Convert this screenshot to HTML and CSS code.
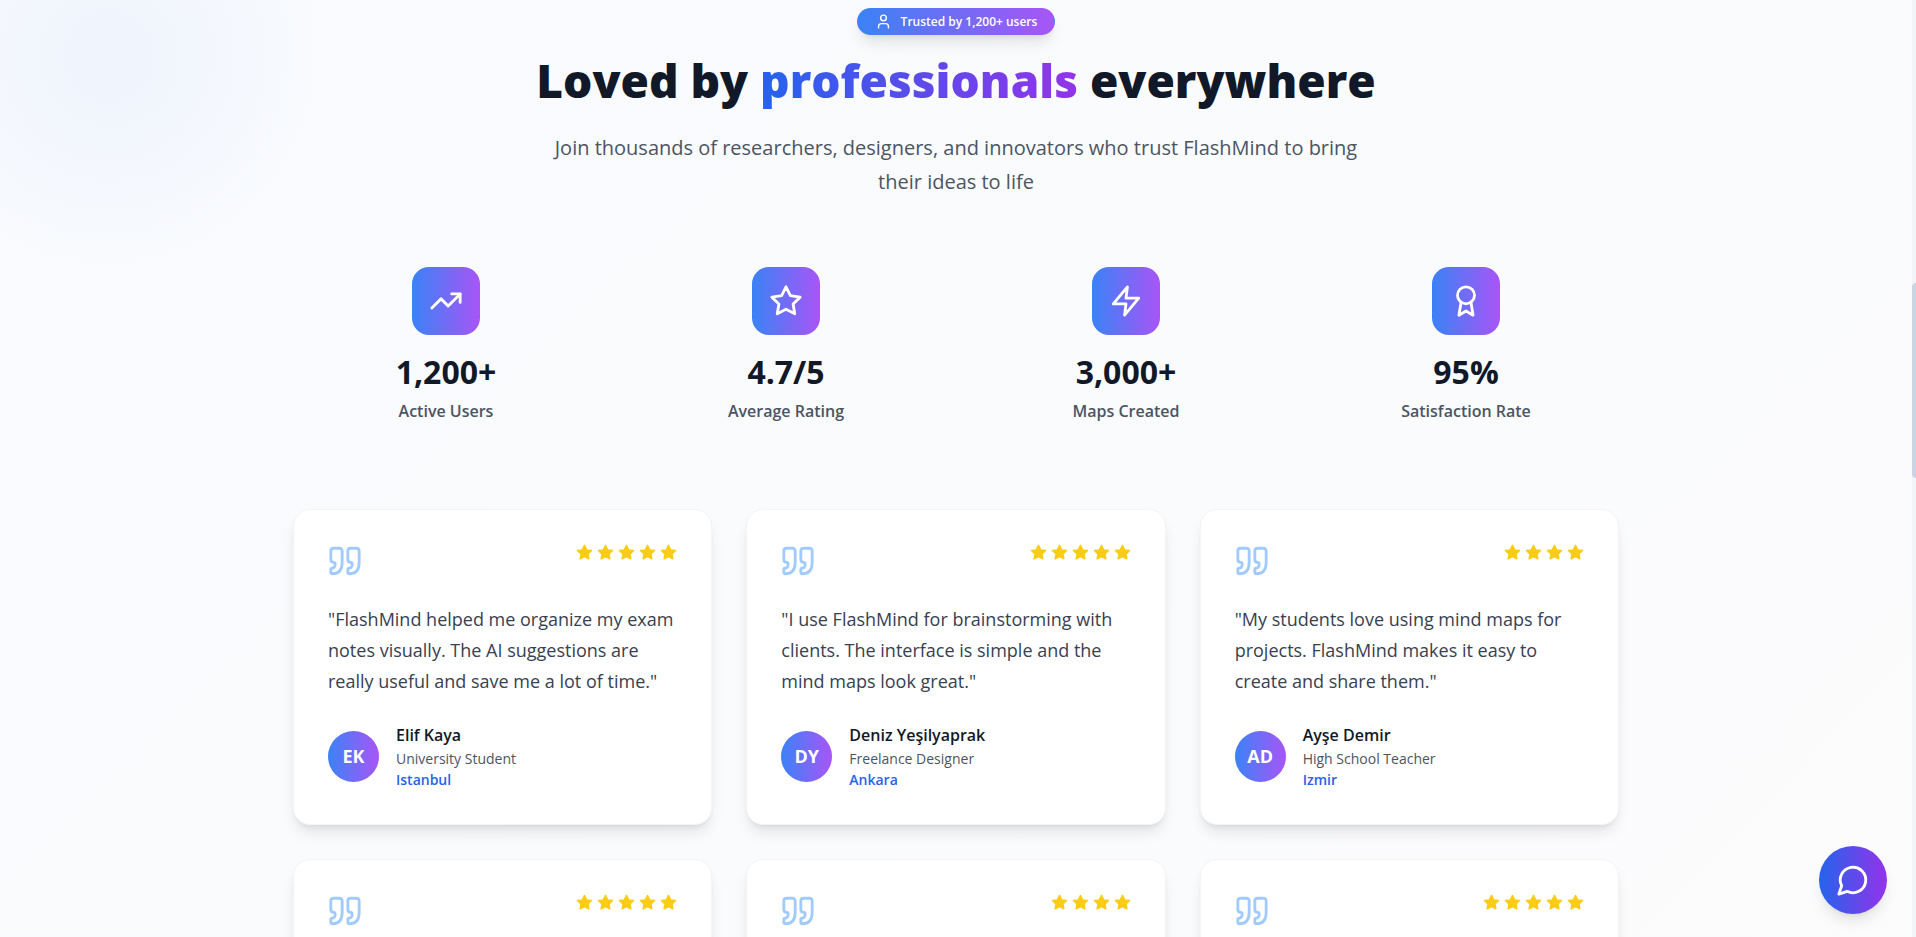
FILE: index.html
```html
<!DOCTYPE html>
<html lang="en">

<head>
    <meta charset="UTF-8">
    <meta name="viewport" content="width=device-width, initial-scale=1.0">
    <title>FlashMind</title>
    <link rel="stylesheet" href="styles.css">
</head>

<body>
    <!-- Shared icon shapes -->
    <svg class="sprite" aria-hidden="true">
        <symbol id="icon-star" viewBox="0 0 24 24">
            <polygon points="12 2 15.09 8.26 22 9.27 17 14.14 18.18 21.02 12 17.77 5.82 21.02 7 14.14 2 9.27 8.91 8.26 12 2" />
        </symbol>
        <symbol id="icon-quote" viewBox="0 0 24 24">
            <path d="M3 21c3 0 7-1 7-8V5c0-1.25-.756-2.017-2-2H4c-1.25 0-2 .75-2 1.972V11c0 1.25.75 2 2 2 1 0 1 0 1 1v1c0 1-1 2-2 2s-1 .008-1 1.031V20c0 1 0 1 1 1z" />
            <path d="M15 21c3 0 7-1 7-8V5c0-1.25-.757-2.017-2-2h-4c-1.25 0-2 .75-2 1.972V11c0 1.25.75 2 2 2 1 0 1 0 1 1v1c0 1-1 2-2 2s-1 .008-1 1.031V20c0 1 0 1 1 1z" />
        </symbol>
    </svg>

    <main class="testimonials">
        <div class="container">
            <header class="intro">
                <div class="badge">
                    <svg class="icon" viewBox="0 0 24 24"><circle cx="12" cy="7" r="4" /><path d="M19 21v-2a4 4 0 0 0-4-4H9a4 4 0 0 0-4 4v2" /></svg>
                    <span>Trusted by 1,200+ users</span>
                </div>
                <h2>Loved by <span class="highlight">professionals</span> everywhere</h2>
                <p class="subtitle">Join thousands of researchers, designers, and innovators who trust FlashMind to bring their ideas to life</p>
            </header>

            <div class="stats">
                <div class="stat">
                    <div class="stat-icon">
                        <svg class="icon" viewBox="0 0 24 24"><polyline points="22 7 13.5 15.5 8.5 10.5 2 17" /><polyline points="16 7 22 7 22 13" /></svg>
                    </div>
                    <div class="stat-value">1,200+</div>
                    <div class="stat-label">Active Users</div>
                </div>
                <div class="stat">
                    <div class="stat-icon">
                        <svg class="icon"><use href="#icon-star" /></svg>
                    </div>
                    <div class="stat-value">4.7/5</div>
                    <div class="stat-label">Average Rating</div>
                </div>
                <div class="stat">
                    <div class="stat-icon">
                        <svg class="icon" viewBox="0 0 24 24"><polygon points="13 2 3 14 12 14 11 22 21 10 12 10 13 2" /></svg>
                    </div>
                    <div class="stat-value">3,000+</div>
                    <div class="stat-label">Maps Created</div>
                </div>
                <div class="stat">
                    <div class="stat-icon">
                        <svg class="icon" viewBox="0 0 24 24"><circle cx="12" cy="8" r="6" /><path d="M15.477 12.89 17 22l-5-3-5 3 1.523-9.11" /></svg>
                    </div>
                    <div class="stat-value">95%</div>
                    <div class="stat-label">Satisfaction Rate</div>
                </div>
            </div>

            <div class="cards">
                <article class="card">
                    <div class="card-top">
                        <svg class="icon quote"><use href="#icon-quote" /></svg>
                        <div class="stars">
                            <svg><use href="#icon-star" /></svg>
                            <svg><use href="#icon-star" /></svg>
                            <svg><use href="#icon-star" /></svg>
                            <svg><use href="#icon-star" /></svg>
                            <svg><use href="#icon-star" /></svg>
                        </div>
                    </div>
                    <p class="card-text">"FlashMind helped me organize my exam notes visually. The AI suggestions are really useful and save me a lot of time."</p>
                    <div class="author">
                        <div class="avatar">EK</div>
                        <div>
                            <div class="name">Elif Kaya</div>
                            <div class="role">University Student</div>
                            <div class="city">Istanbul</div>
                        </div>
                    </div>
                </article>

                <article class="card">
                    <div class="card-top">
                        <svg class="icon quote"><use href="#icon-quote" /></svg>
                        <div class="stars">
                            <svg><use href="#icon-star" /></svg>
                            <svg><use href="#icon-star" /></svg>
                            <svg><use href="#icon-star" /></svg>
                            <svg><use href="#icon-star" /></svg>
                            <svg><use href="#icon-star" /></svg>
                        </div>
                    </div>
                    <p class="card-text">"I use FlashMind for brainstorming with clients. The interface is simple and the mind maps look great."</p>
                    <div class="author">
                        <div class="avatar">DY</div>
                        <div>
                            <div class="name">Deniz Yeşilyaprak</div>
                            <div class="role">Freelance Designer</div>
                            <div class="city">Ankara</div>
                        </div>
                    </div>
                </article>

                <article class="card">
                    <div class="card-top">
                        <svg class="icon quote"><use href="#icon-quote" /></svg>
                        <div class="stars">
                            <svg><use href="#icon-star" /></svg>
                            <svg><use href="#icon-star" /></svg>
                            <svg><use href="#icon-star" /></svg>
                            <svg><use href="#icon-star" /></svg>
                        </div>
                    </div>
                    <p class="card-text">"My students love using mind maps for projects. FlashMind makes it easy to create and share them."</p>
                    <div class="author">
                        <div class="avatar">AD</div>
                        <div>
                            <div class="name">Ayşe Demir</div>
                            <div class="role">High School Teacher</div>
                            <div class="city">Izmir</div>
                        </div>
                    </div>
                </article>

                <!-- Second row -->
                <article class="card">
                    <div class="card-top">
                        <svg class="icon quote"><use href="#icon-quote" /></svg>
                        <div class="stars">
                            <svg><use href="#icon-star" /></svg>
                            <svg><use href="#icon-star" /></svg>
                            <svg><use href="#icon-star" /></svg>
                            <svg><use href="#icon-star" /></svg>
                            <svg><use href="#icon-star" /></svg>
                        </div>
                    </div>
                </article>

                <article class="card">
                    <div class="card-top">
                        <svg class="icon quote"><use href="#icon-quote" /></svg>
                        <div class="stars">
                            <svg><use href="#icon-star" /></svg>
                            <svg><use href="#icon-star" /></svg>
                            <svg><use href="#icon-star" /></svg>
                            <svg><use href="#icon-star" /></svg>
                        </div>
                    </div>
                </article>

                <article class="card">
                    <div class="card-top">
                        <svg class="icon quote"><use href="#icon-quote" /></svg>
                        <div class="stars">
                            <svg><use href="#icon-star" /></svg>
                            <svg><use href="#icon-star" /></svg>
                            <svg><use href="#icon-star" /></svg>
                            <svg><use href="#icon-star" /></svg>
                            <svg><use href="#icon-star" /></svg>
                        </div>
                    </div>
                </article>
            </div>
        </div>
    </main>

    <div class="scroll-track">
        <div class="scroll-thumb"></div>
    </div>

    <button class="chat-button" type="button" aria-label="Open chat">
        <svg class="icon" viewBox="0 0 24 24"><path d="M7.9 20A9 9 0 1 0 4 16.1L2 22Z" /></svg>
    </button>
</body>

</html>
```
FILE: styles.css
```css
* {
    box-sizing: border-box;
}

body {
    font-family: "Open Sans", "Noto Sans", sans-serif;
    margin: 0;
    height: 100vh;
    overflow: hidden;
    color: #111827;
}

h2,
p {
    margin: 0;
}

.sprite {
    display: none;
}

.icon {
    fill: none;
    stroke: currentColor;
    stroke-width: 2;
    stroke-linecap: round;
    stroke-linejoin: round;
}

.testimonials {
    height: 100%;
    overflow: hidden;
    padding: 8px 21px 0 17px;
    background:
        radial-gradient(circle at 110px 57px, rgba(219, 230, 254, 0.32), rgba(219, 230, 254, 0) 210px),
        linear-gradient(135deg, #f8fafd, #fafbfd 45%, #fcfcfd);
}

.container {
    max-width: 1326px;
    margin: 0 auto;
}

/* Heading */
.intro {
    display: flex;
    flex-direction: column;
    align-items: center;
    text-align: center;
    margin-bottom: 68px;
}

.badge {
    display: flex;
    align-items: center;
    gap: 9px;
    padding: 4px 17px;
    border: 1px solid transparent;
    border-radius: 999px;
    background-image: linear-gradient(to right, #3b82f6, #a855f7);
    box-shadow: 0 10px 15px -3px rgba(0, 0, 0, 0.1), 0 4px 6px -4px rgba(0, 0, 0, 0.1);
    color: #fff;
    font-size: 12px;
    font-weight: 600;
    line-height: 17px;
}

.badge .icon {
    width: 17px;
    height: 17px;
}

.intro h2 {
    margin-top: 15px;
    font-size: 46px;
    font-weight: 800;
    line-height: 60px;
}

.highlight {
    background: linear-gradient(to right, #2563eb, #9333ea);
    -webkit-background-clip: text;
    background-clip: text;
    color: transparent;
}

.subtitle {
    max-width: 816px;
    margin-top: 21px;
    font-size: 20px;
    line-height: 34px;
    color: #4b5563;
}

/* Stats */
.stats {
    display: grid;
    grid-template-columns: repeat(4, 1fr);
    gap: 34px;
    margin-bottom: 85px;
    text-align: center;
}

.stat-icon {
    display: flex;
    align-items: center;
    justify-content: center;
    width: 68px;
    height: 68px;
    margin: 0 auto 18px;
    border-radius: 17px;
    background: linear-gradient(to right, #3b82f6, #a855f7);
    color: #fff;
}

.stat-icon .icon,
.chat-button .icon {
    width: 34px;
    height: 34px;
}

.stat-value {
    margin-bottom: 7px;
    font-size: 32px;
    font-weight: 700;
    line-height: 38px;
}

.stat-label {
    font-size: 16px;
    font-weight: 600;
    line-height: 26px;
    color: #4b5563;
}

/* Cards */
.cards {
    display: grid;
    grid-template-columns: repeat(3, 1fr);
    gap: 34px;
}

.card {
    padding: 34px;
    border: 1px solid #f3f4f6;
    border-radius: 17px;
    background: #fff;
    box-shadow: 0 10px 15px -3px rgba(0, 0, 0, 0.1), 0 4px 6px -4px rgba(0, 0, 0, 0.1);
}

.card-top {
    display: flex;
    align-items: flex-start;
    justify-content: space-between;
    margin-bottom: 26px;
}

.quote {
    width: 34px;
    height: 34px;
    color: #a1cbfc;
}

.stars {
    display: flex;
    gap: 4px;
}

.stars svg {
    width: 17px;
    height: 17px;
    fill: #facc15;
    stroke: #facc15;
    stroke-width: 2;
    stroke-linejoin: round;
}

.card-text {
    margin-bottom: 25px;
    font-size: 18px;
    line-height: 31px;
    color: #374151;
}

.author {
    display: flex;
    align-items: center;
    gap: 17px;
}

.avatar {
    display: flex;
    align-items: center;
    justify-content: center;
    width: 51px;
    height: 51px;
    border-radius: 50%;
    background: linear-gradient(to right, #3b82f6, #a855f7);
    color: #fff;
    font-size: 18px;
    font-weight: 700;
}

.name {
    font-size: 16px;
    font-weight: 600;
    line-height: 26px;
}

.role,
.city {
    font-size: 14px;
    line-height: 21px;
    color: #4b5563;
}

.city {
    font-weight: 600;
    color: #2563eb;
}

/* Page edge */
.scroll-track {
    position: fixed;
    top: 0;
    right: 0;
    bottom: 0;
    width: 4px;
    background: #f1f5f9;
}

.scroll-thumb {
    height: 195px;
    margin-top: 283px;
    border-radius: 4px 0 0 4px;
    background: #cbd5e1;
}

.chat-button {
    position: fixed;
    right: 29px;
    bottom: 23px;
    display: flex;
    align-items: center;
    justify-content: center;
    width: 68px;
    height: 68px;
    padding: 0;
    border: none;
    border-radius: 50%;
    background: linear-gradient(to right, #2563eb, #9333ea);
    box-shadow: 0 10px 15px -3px rgba(0, 0, 0, 0.1), 0 4px 6px -4px rgba(0, 0, 0, 0.1);
    color: #fff;
    cursor: pointer;
}

@media only screen and (max-width: 900px) {
    .stats {
        grid-template-columns: repeat(2, 1fr);
    }

    .cards {
        grid-template-columns: 1fr;
    }
}
```
